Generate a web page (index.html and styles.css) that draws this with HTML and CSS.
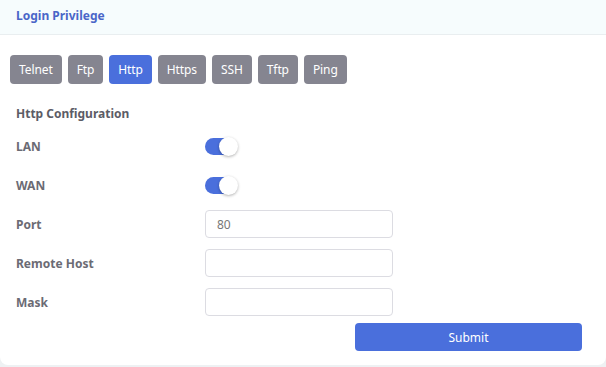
FILE: index.html
```html
<!DOCTYPE html>
<html lang="en">
<head>
<meta http-equiv="Content-Type" content="text/html; charset=utf-8"/>
<title>Login Privilege</title>
<link rel="stylesheet" href="styles.css">
</head>
<body>

<div class="panel">
  <!-- Header -->
  <div class="panel-head">Login Privilege</div>

  <div class="panel-body">
    <!-- Protocol tabs -->
    <div class="tabs">
      <button class="tab">Telnet</button>
      <button class="tab">Ftp</button>
      <button class="tab active">Http</button>
      <button class="tab">Https</button>
      <button class="tab">SSH</button>
      <button class="tab">Tftp</button>
      <button class="tab">Ping</button>
    </div>

    <div class="section-title">Http Configuration</div>

    <!-- Form -->
    <div class="form">
      <div class="row">
        <label class="label">LAN</label>
        <span class="switch on"><span class="knob"></span></span>
      </div>
      <div class="row">
        <label class="label">WAN</label>
        <span class="switch on"><span class="knob"></span></span>
      </div>
      <div class="row">
        <label class="label">Port</label>
        <input class="input" type="text" value="80">
      </div>
      <div class="row">
        <label class="label">Remote Host</label>
        <input class="input" type="text">
      </div>
      <div class="row">
        <label class="label">Mask</label>
        <input class="input" type="text">
      </div>
    </div>

    <div class="actions">
      <button class="submit-btn">Submit</button>
    </div>
  </div>
</div>

</body>
</html>
```

FILE: styles.css
```css
/* ======== Reset ======== */
* {
  box-sizing: border-box;
  margin: 0;
  padding: 0;
}

/* ======== Page ======== */
body {
  width: 606px;
  height: 367px;
  background: #eef1f3;
  font-family: "Noto Sans", "Open Sans", sans-serif;
  overflow: hidden;
}

.panel {
  width: 606px;
  height: 365px;
  background: #fff;
  border-radius: 0 0 8px 8px;
}

/* ======== Header ======== */
.panel-head {
  height: 35px;
  padding: 0 16px;
  line-height: 31px;
  font-size: 12px;
  font-weight: 700;
  color: #4a66c8;
  background: #f6fcfd;
  border-bottom: 1px solid #e9eef0;
}

.panel-body {
  padding: 19px 24px 0 10px;
}

/* ======== Tabs ======== */
.tabs {
  display: flex;
  gap: 6px;
  margin-top: 1px;
}

.tab {
  height: 29px;
  padding: 0 9px;
  font-family: inherit;
  font-size: 12px;
  letter-spacing: -0.1px;
  color: #fff;
  background: #858590;
  border: none;
  border-radius: 4px;
}

.tab.active { background: #4a6fdc; }

/* ======== Form ======== */
.section-title {
  margin: 21px 0 0 6px;
  font-size: 12px;
  font-weight: 700;
  color: #5c5c66;
}

.form {
  display: flex;
  flex-direction: column;
  gap: 11px;
  margin-top: 10px;
}

.row {
  display: flex;
  align-items: center;
  height: 28px;
}

.label {
  width: 195px;
  padding-left: 6px;
  font-size: 12px;
  font-weight: 700;
  color: #6b6b74;
}

.switch {
  position: relative;
  width: 32px;
  height: 17px;
  background: #4a6fdc;
  border-radius: 9px;
}

.switch .knob {
  position: absolute;
  top: -1px;
  right: -1px;
  width: 19px;
  height: 19px;
  background: #fff;
  border-radius: 50%;
  box-shadow: 0 1px 3px rgba(0, 0, 0, 0.3);
}

.input {
  width: 188px;
  height: 28px;
  padding: 0 11px;
  font-family: inherit;
  font-size: 12px;
  color: #777;
  background: #fff;
  border: 1px solid #dcdce2;
  border-radius: 4px;
  outline: none;
}

.actions {
  display: flex;
  justify-content: flex-end;
  margin-top: 7px;
}

.submit-btn {
  width: 227px;
  height: 28px;
  font-family: inherit;
  font-size: 12px;
  color: #fff;
  background: #4a6fdc;
  border: none;
  border-radius: 4px;
}
```
